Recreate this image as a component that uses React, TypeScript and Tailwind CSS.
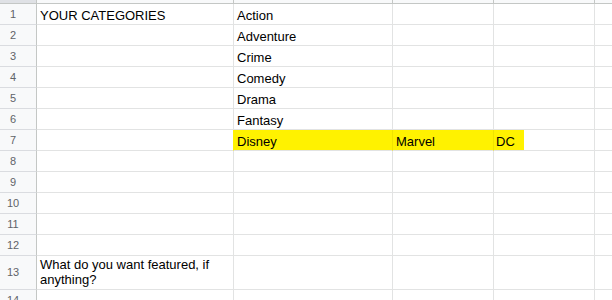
import React from "react";

const cols = ["w-[197px]", "w-[159px]", "w-[101px]", "w-[101px]"];

type RowDef = { n: number; cells: string[]; yellow?: boolean };

const rows: RowDef[] = [
  { n: 1, cells: ["YOUR CATEGORIES", "Action", "", ""] },
  { n: 2, cells: ["", "Adventure", "", ""] },
  { n: 3, cells: ["", "Crime", "", ""] },
  { n: 4, cells: ["", "Comedy", "", ""] },
  { n: 5, cells: ["", "Drama", "", ""] },
  { n: 6, cells: ["", "Fantasy", "", ""] },
  { n: 7, cells: ["", "Disney", "Marvel", "DC"], yellow: true },
  { n: 8, cells: ["", "", "", ""] },
  { n: 9, cells: ["", "", "", ""] },
  { n: 10, cells: ["", "", "", ""] },
  { n: 11, cells: ["", "", "", ""] },
  { n: 12, cells: ["", "", "", ""] },
  { n: 13, cells: ["What do you want featured, if anything?", "", "", ""] },
  { n: 14, cells: ["", "", "", ""] },
];

function Row({ r }: { r: RowDef }) {
  const tall = r.n === 13;
  return (
    <div className={`flex ${tall ? "h-[34px]" : "h-[21px]"} shrink-0`}>
      <div className="w-[37px] shrink-0 bg-[#f8f9fa] border-r border-b border-r-[#c4c7c5] border-b-[#dadce0] flex items-center justify-center pr-[10px] text-[11px] text-[#5f6368]">
        {r.n}
      </div>
      {/* Column A */}
      <div
        className={`${cols[0]} shrink-0 border-b border-[#e2e3e3] ${
          r.yellow ? "border-r border-r-[#fff200]" : "border-r"
        } pl-[3px] pr-[3px] ${tall ? "pt-[1px] leading-[15px]" : "pt-[4px] leading-[16px]"} overflow-hidden`}
      >
        {r.cells[0]}
      </div>
      {/* Column B */}
      <div
        className={`${cols[1]} shrink-0 border-b border-r ${
          r.yellow ? "bg-[#fff200] border-[#efe300] border-b-[#e2e3e3]" : "border-[#e2e3e3]"
        } pl-[3px] pt-[4px] leading-[16px] whitespace-nowrap overflow-hidden`}
      >
        {r.cells[1]}
      </div>
      {/* Column C */}
      <div
        className={`${cols[2]} shrink-0 border-b border-r ${
          r.yellow ? "bg-[#fff200] border-[#efe300] border-b-[#e2e3e3]" : "border-[#e2e3e3]"
        } pl-[3px] pt-[4px] leading-[16px] whitespace-nowrap overflow-hidden`}
      >
        {r.cells[2]}
      </div>
      {/* Column D */}
      <div className={`${cols[3]} shrink-0 border-b border-r border-[#e2e3e3] flex`}>
        {r.yellow ? (
          <div className="w-[30px] h-full bg-[#fff200] pl-[2px] pt-[4px] leading-[16px] whitespace-nowrap">
            {r.cells[3]}
          </div>
        ) : null}
      </div>
      {/* Column E */}
      <div className="flex-1 border-b border-[#e2e3e3]" />
    </div>
  );
}

export default function App() {
  return (
    <div
      className="w-[612px] h-[300px] overflow-hidden bg-white text-[13px] text-black"
      style={{ fontFamily: '"Liberation Sans", Arial, sans-serif' }}
    >
      {/* header strip */}
      <div className="flex h-[4px] border-b border-[#c4c7c5]">
        <div className="w-[37px] shrink-0 bg-[#dfe1e5] border-r border-[#c4c7c5]" />
        <div className={`${cols[0]} shrink-0 bg-[#f8f9fa] border-r border-[#c4c7c5]`} />
        <div className={`${cols[1]} shrink-0 bg-[#f8f9fa] border-r border-[#c4c7c5]`} />
        <div className={`${cols[2]} shrink-0 bg-[#f8f9fa] border-r border-[#c4c7c5]`} />
        <div className={`${cols[3]} shrink-0 bg-[#f8f9fa] border-r border-[#c4c7c5]`} />
        <div className="flex-1 bg-[#f8f9fa]" />
      </div>
      {rows.map((r) => (
        <Row key={r.n} r={r} />
      ))}
    </div>
  );
}
